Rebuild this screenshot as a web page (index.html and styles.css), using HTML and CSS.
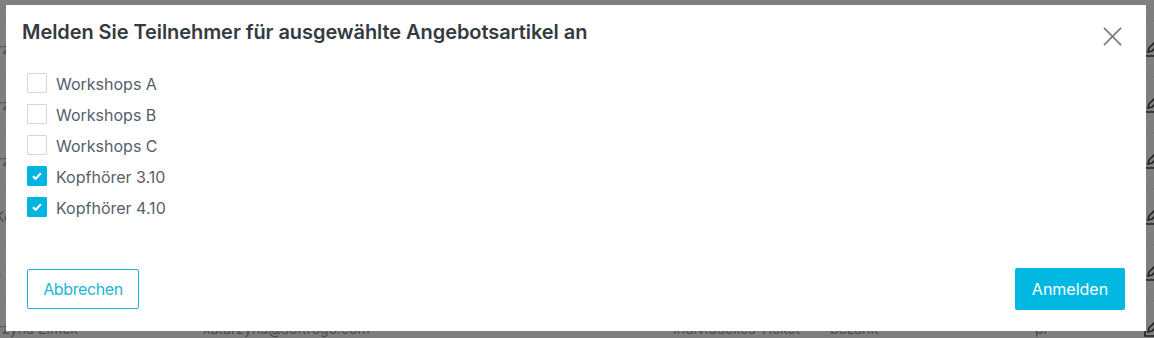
FILE: index.html
```html
<!DOCTYPE html>
<html lang="de">
<head>
	<meta charset="UTF-8">
	<title>Teilnehmer anmelden</title>
	<link rel="stylesheet" href="styles.css">
</head>
<body>
	<div class="page">
		<div class="rows">
			<div class="row"><span class="c-name">Katarzyna Nowak</span><span class="c-mail">katarzyna.nowak@softrogo.com</span><span class="c-ticket">Individuelles Ticket</span><span class="c-state">bezahlt</span><span class="c-lang">pl</span><span class="c-edit"><svg viewBox="0 0 16 16"><path d="M2 5v10h10"/><path d="M5 11l1-4 8-8 3 3-8 8z"/></svg></span></div>
			<div class="row"><span class="c-name">Katarzyna Lis</span><span class="c-mail">katarzyna.lis@softrogo.com</span><span class="c-ticket">Individuelles Ticket</span><span class="c-state">bezahlt</span><span class="c-lang">pl</span><span class="c-edit"><svg viewBox="0 0 16 16"><path d="M2 5v10h10"/><path d="M5 11l1-4 8-8 3 3-8 8z"/></svg></span></div>
			<div class="row"><span class="c-name">Katarzyna Wójcik</span><span class="c-mail">k.wojcik@softrogo.com</span><span class="c-ticket">Individuelles Ticket</span><span class="c-state">bezahlt</span><span class="c-lang">pl</span><span class="c-edit"><svg viewBox="0 0 16 16"><path d="M2 5v10h10"/><path d="M5 11l1-4 8-8 3 3-8 8z"/></svg></span></div>
			<div class="row"><span class="c-name">Jan Kowalski</span><span class="c-mail">jan.kowalski@softrogo.com</span><span class="c-ticket">Individuelles Ticket</span><span class="c-state">bezahlt</span><span class="c-lang">pl</span><span class="c-edit"><svg viewBox="0 0 16 16"><path d="M2 5v10h10"/><path d="M5 11l1-4 8-8 3 3-8 8z"/></svg></span></div>
			<div class="row"><span class="c-name">Anna Lipska</span><span class="c-mail">anna.lipska@softrogo.com</span><span class="c-ticket">Individuelles Ticket</span><span class="c-state">bezahlt</span><span class="c-lang">pl</span><span class="c-edit"><svg viewBox="0 0 16 16"><path d="M2 5v10h10"/><path d="M5 11l1-4 8-8 3 3-8 8z"/></svg></span></div>
			<div class="row"><span class="c-name">Katarzyna Zimek</span><span class="c-mail">katarzyna@softrogo.com</span><span class="c-ticket">Individuelles Ticket</span><span class="c-state">bezahlt</span><span class="c-lang">pl</span><span class="c-edit"><svg viewBox="0 0 16 16"><path d="M2 5v10h10"/><path d="M5 11l1-4 8-8 3 3-8 8z"/></svg></span></div>
		</div>
	</div>

	<div class="backdrop">
		<div class="modal">
			<div class="modal-head">
				<h2>Melden Sie Teilnehmer für ausgewählte Angebotsartikel an</h2>
				<button class="close" type="button">
					<svg viewBox="0 0 20 20"><path d="M1 1l18 18M19 1L1 19"/></svg>
				</button>
			</div>
			<div class="modal-body">
				<label class="check"><span class="box"></span>Workshops A</label>
				<label class="check"><span class="box"></span>Workshops B</label>
				<label class="check"><span class="box"></span>Workshops C</label>
				<label class="check on"><span class="box"><svg viewBox="0 0 20 20"><path d="M5.5 10.2l3 2.8 5.8-6"/></svg></span>Kopfhörer 3.10</label>
				<label class="check on"><span class="box"><svg viewBox="0 0 20 20"><path d="M5.5 10.2l3 2.8 5.8-6"/></svg></span>Kopfhörer 4.10</label>
			</div>
			<div class="modal-foot">
				<button class="btn btn-line" type="button">Abbrechen</button>
				<button class="btn btn-fill" type="button">Anmelden</button>
			</div>
		</div>
	</div>
</body>
</html>
```

FILE: styles.css
```css
*{
	margin: 0;
	padding: 0;
	box-sizing: border-box;
}
body{
	font-family: Inter, "Liberation Sans", sans-serif;
	background: #fff;
	overflow: hidden;
}

/* table behind the dialog */
.page{
	width: 100%;
	height: 338px;
	overflow: hidden;
}
.rows{
	padding-top: 20px;
	margin-left: -33px;
	width: 1200px;
}
.row{
	height: 56px;
	border-top: 1px solid #eee;
	display: flex;
	align-items: center;
	font-size: 14px;
	color: #999;
}
.c-name{ width: 236px; }
.c-mail{ width: 470px; }
.c-ticket{ width: 157px; }
.c-state{ width: 205px; }
.c-lang{ width: 108px; }
.c-edit svg{
	display: block;
	width: 16px;
	height: 16px;
	fill: none;
	stroke: #444;
	stroke-width: 1.6;
}

/* dialog */
.backdrop{
	position: fixed;
	top: 0;
	left: 0;
	right: 0;
	bottom: 0;
	background: rgba(0,0,0,.5);
	display: flex;
	padding: 5px 8px 7px 6px;
}
.modal{
	flex: 1;
	background: #fff;
	display: flex;
	flex-direction: column;
}
.modal-head{
	display: flex;
	justify-content: space-between;
	align-items: flex-start;
	padding: 15px 24px 0 16px;
}
.modal-head h2{
	font-size: 20px;
	line-height: 24px;
	font-weight: 600;
	letter-spacing: -0.07px;
	color: #343a40;
}
.close{
	margin-top: 7px;
	width: 19px;
	height: 19px;
	border: 0;
	background: none;
	cursor: pointer;
}
.close svg{
	display: block;
	width: 19px;
	height: 19px;
	stroke: #7d7d7d;
	stroke-width: 1.8;
}

.modal-body{
	padding: 22px 21px 0;
}
.check{
	display: flex;
	align-items: center;
	gap: 9px;
	height: 31px;
	font-size: 16px;
	color: #56606b;
	cursor: pointer;
}
.check .box{
	width: 20px;
	height: 20px;
	margin-top: -2px;
	border: 1px solid #d3d7db;
	border-radius: 1px;
	background: #fff;
}
.check.on .box{
	border-color: #00b5e2;
	background: #00b5e2;
}
.check .box svg{
	display: block;
	width: 18px;
	height: 18px;
	fill: none;
	stroke: #fff;
	stroke-width: 2.4;
}

.modal-foot{
	margin-top: auto;
	display: flex;
	justify-content: space-between;
	align-items: center;
	padding: 0 21px 21px;
}
.btn{
	font-family: Inter, "Liberation Sans", sans-serif;
	font-size: 16px;
	border-radius: 2px;
	cursor: pointer;
}
.btn-line{
	width: 112px;
	height: 40px;
	border: 1px solid #1ab4dc;
	background: #fff;
	color: #1ab4dc;
	letter-spacing: -0.4px;
}
.btn-fill{
	width: 110px;
	height: 42px;
	border: 0;
	background: #00b8e2;
	color: #fff;
}
```
